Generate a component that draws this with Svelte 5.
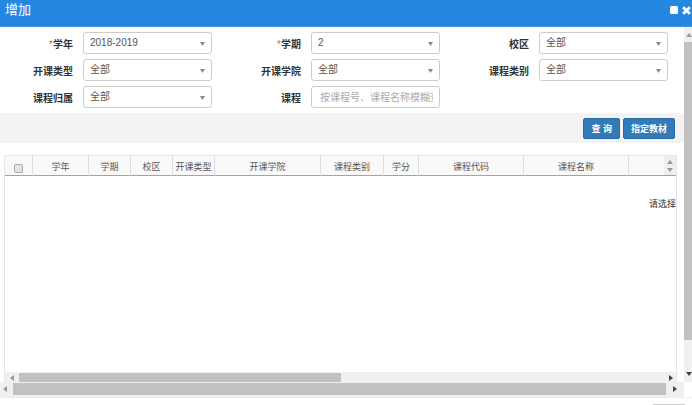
<script lang="ts">
	type Field = {
		id: string;
		label: string;
		required?: boolean;
		options?: string[];
		placeholder?: string;
	};

	const fields: Field[] = [
		{ id: 'year', label: '学年', required: true, options: ['2018-2019'] },
		{ id: 'term', label: '学期', required: true, options: ['2', '1'] },
		{ id: 'campus', label: '校区', options: ['全部'] },
		{ id: 'type', label: '开课类型', options: ['全部'] },
		{ id: 'college', label: '开课学院', options: ['全部'] },
		{ id: 'category', label: '课程类别', options: ['全部'] },
		{ id: 'owner', label: '课程归属', options: ['全部'] },
		{ id: 'course', label: '课程', placeholder: '按课程号、课程名称模糊查询' }
	];

	const columns = [
		{ title: '学年', width: 56 },
		{ title: '学期', width: 42 },
		{ title: '校区', width: 42 },
		{ title: '开课类型', width: 42 },
		{ title: '开课学院', width: 106 },
		{ title: '课程类别', width: 63 },
		{ title: '学分', width: 35 },
		{ title: '课程代码', width: 105 },
		{ title: '课程名称', width: 105 }
	];

	let keyword = $state('');
	let allChecked = $state(false);
</script>

<div class="modal">
	<header>
		<h1>增加</h1>
		<button class="tool" aria-label="最大化">
			<svg width="8" height="8" viewBox="0 0 8 8"><rect width="8" height="8" rx="1.5" fill="#fff" /></svg>
		</button>
		<button class="tool" aria-label="关闭">
			<svg width="9" height="9" viewBox="0 0 9 9">
				<path d="M1.2 1.2 7.8 7.8M7.8 1.2 1.2 7.8" stroke="#fff" stroke-width="2.8" />
			</svg>
		</button>
	</header>

	<div class="viewport">
		<main>
			<form onsubmit={(e) => e.preventDefault()}>
				<div class="fields">
					{#each fields as field}
						<div class="field">
							<label for={field.id}>
								{#if field.required}<span class="star">*</span>{/if}{field.label}
							</label>
							{#if field.options}
								<div class="select">
									<select id={field.id}>
										{#each field.options as option}
											<option>{option}</option>
										{/each}
									</select>
									<svg width="5" height="4" viewBox="0 0 5 4"><path d="M0 0h5L2.5 4z" fill="#888" /></svg>
								</div>
							{:else}
								<input id={field.id} type="text" placeholder={field.placeholder} bind:value={keyword} />
							{/if}
						</div>
					{/each}
				</div>
				<div class="actions">
					<button class="primary" type="submit">查 询</button>
					<button class="primary" type="button">指定教材</button>
				</div>
			</form>

			<section class="grid">
				<div class="table-wrap">
					<table>
						<colgroup>
							<col style="width: 28px" />
							{#each columns as column}
								<col style="width: {column.width}px" />
							{/each}
							<col />
						</colgroup>
						<thead>
							<tr>
								<th class="check"><input type="checkbox" aria-label="全选" bind:checked={allChecked} /></th>
								{#each columns as column}
									<th>{column.title}</th>
								{/each}
								<th></th>
							</tr>
						</thead>
						<tbody>
							<tr><td colspan={columns.length + 2}>请选择</td></tr>
						</tbody>
					</table>
					<div class="sorter">
						<svg width="6" height="12" viewBox="0 0 6 12">
							<path d="M0 4 3 0l3 4zM0 8h6l-3 4z" fill="#999" />
						</svg>
					</div>
				</div>
				<div class="bar inner">
					<svg width="4" height="6" viewBox="0 0 4 6"><path d="M4 0v6L0 3z" fill="#999" /></svg>
					<div class="track"><div class="thumb" style="width: 49.6%"></div></div>
					<svg width="4" height="6" viewBox="0 0 4 6"><path d="M0 0v6l4-3z" fill="#444" /></svg>
				</div>
			</section>
		</main>

		<div class="vbar">
			<svg width="6" height="4" viewBox="0 0 6 4"><path d="M0 4h6L3 0z" fill="#999" /></svg>
			<div class="vtrack"><div class="thumb" style="height: 91%"></div></div>
			<svg width="6" height="4" viewBox="0 0 6 4"><path d="M0 0h6L3 4z" fill="#444" /></svg>
		</div>

		<div class="bar outer">
			<svg width="4" height="6" viewBox="0 0 4 6"><path d="M4 0v6L0 3z" fill="#999" /></svg>
			<div class="track"><div class="thumb" style="width: 99.4%"></div></div>
			<svg width="4" height="6" viewBox="0 0 4 6"><path d="M0 0v6l4-3z" fill="#444" /></svg>
		</div>
	</div>

	<footer>
		<button aria-label="关闭窗口"></button>
	</footer>
</div>

<style>
	:global(body) {
		margin: 0;
		background: #fff;
	}
	.modal,
	button,
	input,
	select {
		font-family: 'Liberation Sans', 'Noto Sans CJK SC', sans-serif;
	}
	.modal {
		display: flex;
		flex-direction: column;
		height: 100vh;
		overflow: hidden;
		font-size: 10px;
		line-height: 14px;
		color: #333;
	}
	.modal * {
		box-sizing: border-box;
	}
	svg {
		display: block;
		flex: none;
	}
	header {
		display: flex;
		align-items: flex-start;
		gap: 4px;
		height: 27px;
		flex: none;
		padding: 0 1px 0 5px;
		background: #2587df;
		border-bottom: 1px solid #3f97e3;
	}
	h1 {
		flex: 1;
		margin: 0;
		font-size: 13px;
		font-weight: 400;
		line-height: 20px;
		color: #fff;
	}
	.tool {
		padding: 6px 0;
		border: 0;
		background: none;
		cursor: pointer;
	}
	.viewport {
		flex: 1;
		min-height: 0;
		display: grid;
		grid-template-columns: minmax(0, 1fr) 8px;
		grid-template-rows: minmax(0, 1fr) 15px;
	}
	main {
		display: flex;
		flex-direction: column;
		min-height: 0;
	}
	.fields {
		display: grid;
		grid-template-columns: repeat(3, 1fr);
		row-gap: 5px;
		padding: 5px 0;
	}
	.field {
		display: grid;
		grid-template-columns: 73px minmax(0, 1fr);
		column-gap: 10px;
		align-items: center;
		padding-right: 16px;
	}
	label {
		padding-top: 4px;
		font-weight: 700;
		text-align: right;
	}
	.star {
		color: #e2604a;
		font-weight: 400;
	}
	.select {
		display: grid;
		align-items: center;
	}
	.select select,
	.select svg {
		grid-area: 1 / 1;
	}
	.select svg {
		justify-self: end;
		margin: 2px 7px 0 0;
		pointer-events: none;
	}
	select,
	.field input {
		width: 100%;
		height: 22px;
		margin: 0;
		padding: 0 6px 0 8px;
		border: 1px solid #ccc;
		border-radius: 3px;
		background: #fff;
		color: #555;
		font-size: 10px;
		outline: none;
	}
	select {
		appearance: none;
		padding: 0 16px 1px 6px;
	}
	.field input::placeholder {
		color: #aaa;
	}
	.actions {
		display: flex;
		justify-content: flex-end;
		gap: 3px;
		padding: 5px 9px 4px;
		background: #f3f3f3;
	}
	.primary {
		height: 21px;
		padding: 0 7px;
		border: 1px solid #2a6aa6;
		border-radius: 2px;
		background: #337ab7;
		color: #fff;
		font-size: 9px;
		font-weight: 700;
		cursor: pointer;
	}
	.grid {
		flex: 1;
		min-height: 0;
		display: flex;
		flex-direction: column;
		margin: 12px 7px 0 4px;
		border: 1px solid #e6e6e6;
		border-bottom: 0;
	}
	.table-wrap {
		position: relative;
		flex: 1;
		overflow: hidden;
	}
	table {
		width: 100%;
		table-layout: fixed;
		border-collapse: separate;
		border-spacing: 0;
		font-size: 9px;
	}
	th {
		height: 20px;
		padding: 2px 0 0;
		border-right: 1px solid #ddd;
		border-bottom: 1px solid #70b0e5;
		background: #f9f9f9;
		color: #555;
		font-weight: 400;
		line-height: 14px;
		white-space: nowrap;
	}
	th:last-child {
		border-right: 0;
	}
	.check input {
		appearance: none;
		display: block;
		width: 9px;
		height: 9px;
		margin: 4px auto 0;
		border: 1px solid #aaa;
		border-radius: 2px;
		background: #e4e4e4;
	}
	.check input:checked {
		background: #337ab7;
	}
	td {
		padding: 21px 0;
		text-align: right;
		line-height: 14px;
	}
	.sorter {
		position: absolute;
		top: 0;
		right: 0;
		display: grid;
		place-items: center;
		width: 12px;
		height: 19px;
		background: #eee;
	}
	.bar {
		display: flex;
		align-items: center;
		background: #f0f0f0;
	}
	.track {
		flex: 1;
		align-self: stretch;
		display: flex;
	}
	.thumb {
		background: #c1c1c1;
	}
	.inner {
		height: 10px;
		flex: none;
		padding: 1px 3px 0 5px;
	}
	.inner .track {
		margin: 0 0 0 5px;
	}
	.outer {
		padding: 1px 7px 2px 3px;
	}
	.outer .track {
		margin: 0 3px 0 6px;
	}
	.vbar {
		display: flex;
		flex-direction: column;
		align-items: flex-end;
		padding: 6px 0;
		background: #f0f0f0;
	}
	.vtrack {
		flex: 1;
		display: flex;
		flex-direction: column;
		align-self: stretch;
		padding: 5px 0 3px;
	}
	footer {
		height: 8px;
		flex: none;
		display: flex;
		justify-content: flex-end;
		align-items: flex-start;
		padding: 6px 6px 0 0;
		border-top: 1px solid #eee;
		overflow: hidden;
	}
	footer button {
		flex: none;
		width: 34px;
		height: 21px;
		border: 1px solid #ccc;
		border-radius: 2px;
		background: #fff;
	}
</style>
